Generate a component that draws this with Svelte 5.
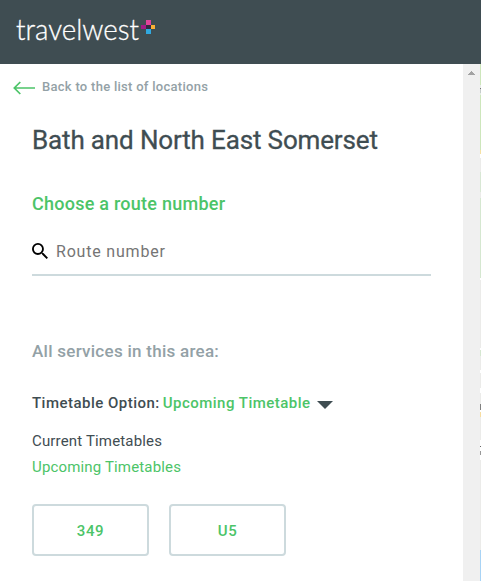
<script lang="ts">
  const area = "Bath and North East Somerset";
  const services = ["349", "U5"];
  const timetables = [
    { label: "Current Timetables", active: false },
    { label: "Upcoming Timetables", active: true },
  ];

  let route = $state("");
</script>

<div class="page">
  <header class="site-header">
    <svg class="logo" width="144" height="44" viewBox="0 0 144 44">
      <text x="0" y="33" textLength="123" lengthAdjust="spacingAndGlyphs">travelwest</text>
      <rect x="130" y="13" width="5" height="5" fill="#e0439a"></rect>
      <rect x="125" y="18" width="5" height="4" fill="#a11c86"></rect>
      <rect x="130" y="18" width="5" height="4" fill="#352a40"></rect>
      <rect x="135" y="18" width="4" height="4" fill="#fbb034"></rect>
      <rect x="130" y="22" width="5" height="5" fill="#30a9e0"></rect>
    </svg>
  </header>

  <div class="body">
    <main class="panel">
      <a class="back" href="#locations">
        <svg width="23" height="14" viewBox="0 0 23 14" fill="none" stroke="#4cc468" stroke-width="1.7">
          <path d="M7.3 1 1.3 7l6 6M1.3 7H22"></path>
        </svg>
        <span>Back to the list of locations</span>
      </a>

      <div class="content">
        <h1>{area}</h1>
        <h2>Choose a route number</h2>

        <label class="search">
          <svg width="16" height="16" viewBox="3 3 17.500 17.500">
            <path
              d="M15.5 14h-.79l-.28-.27A6.47 6.47 0 0 0 16 9.500 6.500 6.500 0 1 0 9.500 16c1.610 0 3.090-.59 4.230-1.570l.27.28v.79l5 4.990L20.490 19l-4.990-5zm-6 0C7.010 14 5 11.990 5 9.500S7.010 5 9.500 5 14 7.010 14 9.500 11.990 14 9.500 14z"
            ></path>
          </svg>
          <input type="text" placeholder="Route number" bind:value={route} />
        </label>

        <h3>All services in this area:</h3>

        <div class="option">
          <span class="option-label">Timetable Option:</span>
          <span class="option-value">Upcoming Timetable</span>
          <svg width="16" height="8" viewBox="0 0 16 8"><path d="M0 0h16L8 8z"></path></svg>
        </div>

        <ul class="timetables">
          {#each timetables as timetable}
            <li class:active={timetable.active}>{timetable.label}</li>
          {/each}
        </ul>

        <div class="services">
          {#each services as service}
            <button class="service">{service}</button>
          {/each}
        </div>
      </div>
    </main>

    <div class="scrollbar">
      <svg width="7" height="4" viewBox="0 0 7 4" shape-rendering="crispEdges">
        <path d="M3 0h1v1h1v1h1v1h1v1H0V3h1V2h1V1h1z"></path>
      </svg>
    </div>
    <div class="map"></div>
  </div>
</div>

<style>
  :global(body) {
    overflow: hidden;
  }

  .page {
    display: flex;
    flex-direction: column;
    height: 581px;
    background: #fff;
    color: #3f4d52;
    font-family: Roboto, sans-serif;
  }

  .site-header {
    height: 64px;
    flex-shrink: 0;
    box-sizing: border-box;
    padding: 7px 16px 0;
    background: #3f4d52;
  }

  .logo {
    display: block;
    overflow: visible;
  }

  .logo text {
    fill: #fff;
    stroke: #fff;
    stroke-width: 0.3px;
    font-family: Lato, sans-serif;
    font-size: 30px;
    font-weight: 300;
  }

  .body {
    display: flex;
    flex: 1;
    min-height: 0;
  }

  .panel {
    flex: 1;
    min-width: 0;
    overflow: hidden;
  }

  .back {
    display: flex;
    align-items: center;
    gap: 6px;
    height: 20px;
    padding: 13px 0 0 13px;
    color: #93a1a6;
    font-size: 13px;
    font-weight: 500;
    line-height: 20px;
    letter-spacing: 0.28px;
    text-decoration: none;
  }

  .back svg {
    margin-top: 2px;
  }

  .content {
    padding: 0 32px;
  }

  h1,
  h2,
  h3 {
    margin: 0;
    font-weight: 500;
    white-space: nowrap;
  }

  h1 {
    padding-top: 27px;
    font-size: 26px;
    line-height: 32px;
    letter-spacing: -0.15px;
    font-weight: 400;
    -webkit-text-stroke: 0.3px;
  }

  h2 {
    padding-top: 36px;
    color: #4cc468;
    font-size: 18px;
    line-height: 24px;
    letter-spacing: 0.25px;
  }

  .search {
    display: flex;
    align-items: center;
    gap: 8px;
    height: 46px;
    margin-top: 12px;
    border-bottom: 2px solid #cddadd;
  }

  .search input {
    flex: 1;
    min-width: 0;
    padding: 2px 0 0;
    border: 0;
    outline: 0;
    background: none;
    font: 400 16px/24px Roboto, sans-serif;
    letter-spacing: 0.8px;
  }

  .search input::placeholder {
    color: #757575;
  }

  h3 {
    padding-top: 63px;
    color: #93a1a6;
    font-size: 17px;
    line-height: 24px;
    letter-spacing: 0.27px;
  }

  .option {
    display: flex;
    align-items: center;
    height: 24px;
    margin-top: 28px;
    font-size: 15px;
    font-weight: 500;
    letter-spacing: 0.48px;
    white-space: nowrap;
  }

  .option-value {
    margin-left: 3px;
    color: #4cc468;
  }

  .option svg {
    margin: 4px 0 0 6px;
    fill: #3f4d52;
  }

  .timetables {
    margin: 13px 0 0;
    padding: 0;
    list-style: none;
    font-size: 15px;
    line-height: 26px;
    letter-spacing: 0.16px;
  }

  .timetables .active {
    color: #4cc468;
  }

  .services {
    display: flex;
    gap: 20px;
    margin-top: 24px;
  }

  .service {
    width: 117px;
    height: 52px;
    padding: 1px 0 0;
    border: 2px solid #cddadd;
    border-radius: 4px;
    background: #fff;
    color: #4cc468;
    font: 500 15px/24px Roboto, sans-serif;
    letter-spacing: 0.6px;
  }

  .scrollbar {
    width: 17px;
    padding-top: 7px;
    box-sizing: border-box;
    background: #f0f0f0;
  }

  .scrollbar svg {
    display: block;
    margin-left: 5px;
    fill: #a3a3a3;
  }

  /* the sliver of map that shows beside the panel */
  .map {
    width: 1px;
    background: linear-gradient(
      #cde6bb 21px,
      #e6ebe6 21px 24px,
      #777 24px 25px,
      #c6cccb 25px 29px,
      #e4ebe2 29px 31px,
      #cde6bb 31px 86px,
      #f5e1a4 86px 90px,
      #fff 90px 94px,
      #ebebe9 94px 108px,
      #d8e7d4 108px 128px,
      #ebebe9 128px 134px,
      #d5e7d0 134px 214px,
      #fff 214px 216px,
      #ebebe9 216px 284px,
      #fff 284px 286px,
      #d5e7d0 286px 292px,
      #ebebe9 292px 306px,
      #fff 306px 309px,
      #ebebe9 309px 324px,
      #fff 324px 329px,
      #ebebe9 329px 340px,
      #808080 340px 346px,
      #fff 346px 348px,
      #f7dda0 348px 353px,
      #ebebe9 353px 376px,
      #fff 376px 382px,
      #666 382px 383px,
      #fff 383px 387px,
      #999 387px 391px,
      #fff 391px 396px,
      #ebebe9 396px 486px,
      #a8d3f5 486px
    );
  }
</style>
